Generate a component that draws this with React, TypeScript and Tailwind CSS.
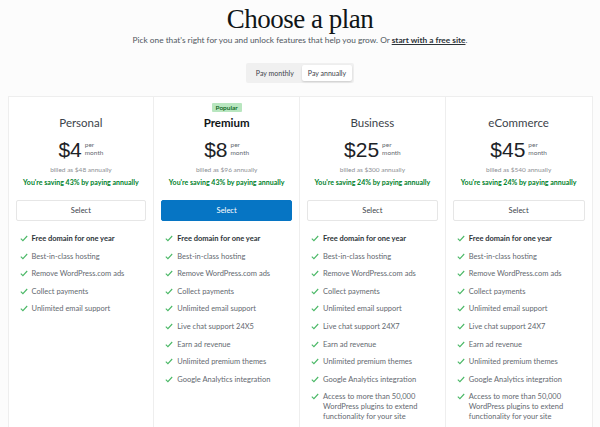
import React from "react";

type Plan = {
  name: string;
  price: string;
  billed: string;
  saving: string;
  popular?: boolean;
  features: string[];
};

const base = [
  "Free domain for one year",
  "Best-in-class hosting",
  "Remove WordPress.com ads",
  "Collect payments",
  "Unlimited email support",
];

const plans: Plan[] = [
  {
    name: "Personal",
    price: "$4",
    billed: "billed as $48 annually",
    saving: "You're saving 43% by paying annually",
    features: base,
  },
  {
    name: "Premium",
    price: "$8",
    billed: "billed as $96 annually",
    saving: "You're saving 43% by paying annually",
    popular: true,
    features: [
      ...base,
      "Live chat support 24X5",
      "Earn ad revenue",
      "Unlimited premium themes",
      "Google Analytics integration",
    ],
  },
  {
    name: "Business",
    price: "$25",
    billed: "billed as $300 annually",
    saving: "You're saving 24% by paying annually",
    features: [
      ...base,
      "Live chat support 24X7",
      "Earn ad revenue",
      "Unlimited premium themes",
      "Google Analytics integration",
      "Access to more than 50,000 WordPress plugins to extend functionality for your site",
    ],
  },
  {
    name: "eCommerce",
    price: "$45",
    billed: "billed as $540 annually",
    saving: "You're saving 24% by paying annually",
    features: [
      ...base,
      "Live chat support 24X7",
      "Earn ad revenue",
      "Unlimited premium themes",
      "Google Analytics integration",
      "Access to more than 50,000 WordPress plugins to extend functionality for your site",
    ],
  },
];

function Check() {
  return (
    <svg width="8" height="7" viewBox="0 0 8 7" className="mt-[1px] shrink-0">
      <path d="M0.8 3.6 L2.9 5.6 L7.2 1" fill="none" stroke="#4ab866" strokeWidth="1.1" />
    </svg>
  );
}

function Card({ plan }: { plan: Plan }) {
  return (
    <div className="flex flex-col px-[7px] pt-[6px] pb-[8px] bg-white">
      <div className="h-[9px] flex justify-center">
        {plan.popular && (
          <span className="bg-[#b8e6bf] text-[#005c12] text-[6.5px] leading-[9px] px-[4px] rounded-[1px] font-semibold">
            Popular
          </span>
        )}
      </div>
      <div
        className={`mt-[3px] text-center text-[11.5px] leading-[16px] ${
          plan.popular ? "font-bold text-[#101517]" : "text-[#3c434a]"
        }`}
      >
        {plan.name}
      </div>
      <div className="mt-[7px] flex justify-center items-center h-[24px]">
        <span className="text-[21px] leading-[24px] text-[#1d2327]" style={{ fontFamily: '"Liberation Sans", Arial, sans-serif' }}>
          {plan.price}
        </span>
        <span className="ml-[3px] flex flex-col text-[6.5px] leading-[8px] text-[#646970] -mt-[3px]">
          <span>per</span>
          <span>month</span>
        </span>
      </div>
      <div className="mt-[3px] text-center text-[6.5px] leading-[10px] text-[#8c8f94]">{plan.billed}</div>
      <div className="mt-[2px] text-center text-[7px] leading-[11px] font-bold text-[#00822b] whitespace-nowrap">
        {plan.saving}
      </div>
      <button
        className={`mt-[12px] h-[21px] rounded-[2px] text-[7.5px] ${
          plan.popular
            ? "bg-[#0675c4] text-white border border-[#0675c4]"
            : "bg-white text-[#3c434a] border border-[#e6e6e6]"
        }`}
      >
        Select
      </button>
      <ul className="mt-[13px] flex flex-col gap-[8px] pl-[4px] pr-[4px]">
        {plan.features.map((f, i) => (
          <li key={i} className="flex gap-[4px] items-start">
            <Check />
            <span
              className={`text-[7.5px] leading-[9.6px] ${
                i === 0 ? "font-bold text-[#2c3338]" : "text-[#646970]"
              }`}
            >
              {f}
            </span>
          </li>
        ))}
      </ul>
    </div>
  );
}

export default function App() {
  return (
    <div
      className="w-[600px] h-[427px] overflow-hidden bg-[#fcfcfc] flex flex-col items-center"
      style={{ fontFamily: 'Lato, "Noto Sans", sans-serif' }}
    >
      <h1
        className="mt-[2px] text-[27px] leading-[34px] tracking-[-0.5px] text-[#101517]"
        style={{ fontFamily: '"Liberation Serif", "Times New Roman", serif' }}
      >
        Choose a plan
      </h1>
      <p className="-mt-[1px] text-[8.3px] leading-[10px] text-[#50575e]">
        Pick one that's right for you and unlock features that help you grow. Or{" "}
        <span className="underline font-bold text-[#2c3338]">start with a free site</span>.
      </p>
      <div className="mt-[18px] flex items-center bg-[#f0f0f0] rounded-[2px] p-[2px] h-[20px]">
        <span className="px-[8px] text-[7px] text-[#3c434a]">Pay monthly</span>
        <span className="px-[6px] h-[16px] flex items-center bg-white rounded-[2px] shadow-[0_1px_2px_rgba(0,0,0,0.15)] text-[7px] text-[#3c434a]">
          Pay annually
        </span>
      </div>
      <div className="mt-[13px] w-[585px] grid grid-cols-4 border border-[#eeeeee] divide-x divide-[#eeeeee] flex-1 items-stretch">
        {plans.map((p) => (
          <Card key={p.name} plan={p} />
        ))}
      </div>
    </div>
  );
}
